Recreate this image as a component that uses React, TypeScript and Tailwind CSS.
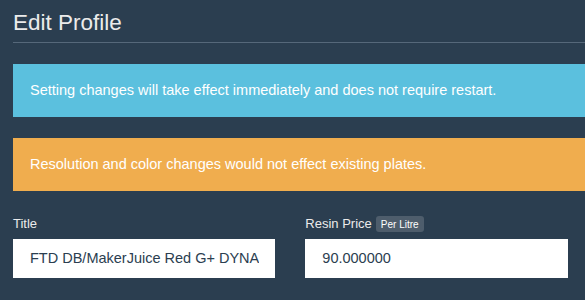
import React from "react";

function Field({
  label,
  badge,
  value,
}: {
  label: string;
  badge?: string;
  value: string;
}) {
  return (
    <div className="flex flex-col min-w-0">
      <div className="h-[22px] flex items-center text-[13px] gap-[4px]">
        <span>{label}</span>
        {badge && (
          <span className="bg-[#4e5d6c] rounded-[3px] px-[5px] h-[16px] flex items-center text-[10px] text-white">
            {badge}
          </span>
        )}
      </div>
      <div className="mt-[4px] h-[39px] bg-white flex items-center pl-[17px] pr-[16px] overflow-hidden">
        <span className="text-[14.5px] text-[#2b3e50] whitespace-nowrap overflow-hidden">
          {value}
        </span>
      </div>
    </div>
  );
}

export default function App() {
  return (
    <div
      className="w-[585px] h-[300px] overflow-hidden bg-[#2b3e50] text-[#ebebeb]"
      style={{ fontFamily: '"Liberation Sans", Arial, sans-serif' }}
    >
      <div className="pl-[13px]">
        <h2 className="text-[22.5px] leading-[26px] pt-[10px] pb-[6px] border-b border-[#56687a] text-[#ebebeb]">
          Edit Profile
        </h2>
        <div className="mt-[21px] h-[53px] bg-[#5bc0de] flex items-center pl-[17px] text-[14.5px] text-white">
          Setting changes will take effect immediately and does not require restart.
        </div>
        <div className="mt-[21px] h-[53px] bg-[#f0ad4e] flex items-center pl-[17px] text-[14.5px] text-white">
          Resolution and color changes would not effect existing plates.
        </div>
        <div className="mt-[22px] grid grid-cols-3 gap-x-[30px] w-[847px]">
          <Field label="Title" value="FTD DB/MakerJuice Red G+ DYNAMIC" />
          <Field label="Resin Price" badge="Per Litre" value="90.000000" />
          <div />
        </div>
      </div>
    </div>
  );
}
